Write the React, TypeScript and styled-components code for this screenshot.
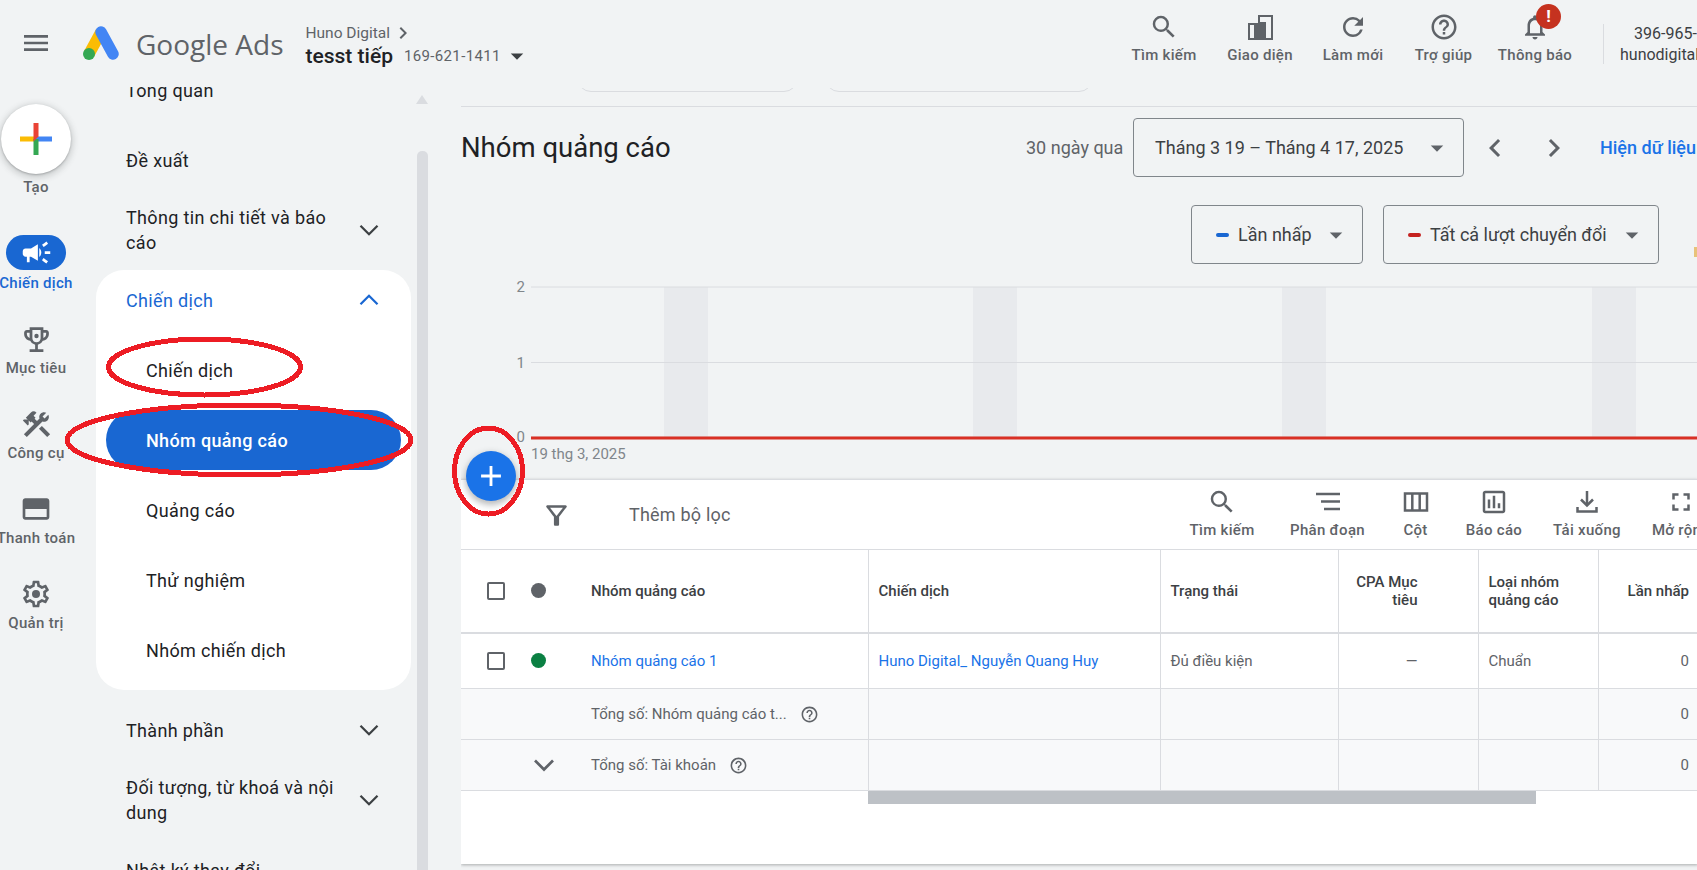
import React from "react";
import styled, { createGlobalStyle } from "styled-components";
import {
  MdAdd,
  MdArrowDropDown,
  MdCampaign,
  MdChevronLeft,
  MdChevronRight,
  MdConstruction,
  MdFullscreen,
  MdHelpOutline,
  MdKeyboardArrowRight,
  MdMenu,
  MdNotificationsNone,
  MdOutlineAssessment,
  MdOutlineFilterAlt,
  MdRefresh,
  MdSearch,
} from "react-icons/md";

const GlobalStyle = createGlobalStyle`
  html, body {
    margin: 0;
    background: #f1f3f4;
    font-family: Roboto, "Liberation Sans", sans-serif;
    color: #3c4043;
  }
`;

const Page = styled.div`
  position: relative;
  width: 1697px;
  height: 870px;
  overflow: hidden;
  background: #f1f3f4;
`;

const Header = styled.header`
  display: flex;
  height: 84px;
  overflow: hidden;
`;

const Brand = styled.div`
  display: flex;
  flex: 0 0 1116px;
  align-items: flex-start;
  padding: 26px 0 0 20px;
  box-sizing: border-box;
`;

const MenuButton = styled.div`
  display: flex;
  width: 32px;
  height: 32px;
  margin-top: 1px;
  font-size: 32px;
  color: #5f6368;
`;

const LogoMark = styled.svg`
  width: 36px;
  height: 34px;
  margin-left: 31px;
`;

const LogoText = styled.div`
  margin-left: 17px;
  font-family: "Open Sans", sans-serif;
  font-size: 28px;
  line-height: 36px;
  color: #5f6368;
`;

const AccountCrumb = styled.div`
  margin: -3px 0 0 22px;
`;

const CrumbParent = styled.div`
  display: flex;
  align-items: center;
  height: 20px;
  font-size: 15.5px;
  color: #5f6368;

  svg {
    font-size: 24px;
    margin-left: 1px;
  }
`;

const CrumbMain = styled.div`
  display: flex;
  align-items: center;
  height: 26px;
`;

const CrumbName = styled.span`
  font-size: 21px;
  font-weight: 500;
  color: #202124;
`;

const CrumbId = styled.span`
  margin-left: 11px;
  font-size: 15px;
  letter-spacing: 0.35px;
  color: #5f6368;
`;

const CrumbCaret = styled.span`
  display: flex;
  margin-left: 1px;
  font-size: 30px;
  color: #3c4043;
`;

const HeaderAction = styled.div<{ $width: number }>`
  position: relative;
  display: flex;
  flex: 0 0 ${(p) => p.$width}px;
  flex-direction: column;
  align-items: center;
  padding-top: 12px;
`;

const ActionIcon = styled.div`
  position: relative;
  display: flex;
  justify-content: center;
  width: 30px;
  height: 30px;
  font-size: 30px;
  color: #5f6368;
`;

const ActionLabel = styled.div`
  margin-top: 3px;
  font-size: 15px;
  line-height: 20px;
  letter-spacing: 0.3px;
  font-weight: 500;
  color: #5f6368;
  white-space: nowrap;
`;

const AlertBadge = styled.span`
  position: absolute;
  top: -8px;
  left: 16px;
  width: 25px;
  height: 25px;
  border-radius: 50%;
  background: #c5321f;
  color: #fff;
  font-size: 17px;
  font-weight: 700;
  line-height: 25px;
  text-align: center;
`;

const HeaderDivider = styled.div`
  flex: 0 0 1px;
  height: 40px;
  margin: 24px 0 0 22px;
  background: #dadce0;
`;

const AccountInfo = styled.div`
  flex: 0 0 auto;
  margin: 23px 0 0 16px;
  font-size: 16px;
  line-height: 21px;
  color: #3c4043;
  white-space: nowrap;
`;

const AccountPhone = styled.div`
  margin-left: 14px;
`;

const Body = styled.div`
  display: flex;
  height: 786px;
`;

const Rail = styled.nav`
  display: flex;
  flex: 0 0 72px;
  flex-direction: column;
  align-items: center;
  gap: 31px;
  min-width: 0;
  width: 72px;
  padding-top: 20px;
`;

const CreateGroup = styled.div`
  display: flex;
  flex-direction: column;
  align-items: center;
  margin-bottom: 7px;
`;

const CreateButton = styled.div`
  display: flex;
  align-items: center;
  justify-content: center;
  width: 70px;
  height: 70px;
  border-radius: 50%;
  background: #fff;
  box-shadow: 0 2px 6px 2px rgba(60, 64, 67, 0.2), 0 1px 2px rgba(60, 64, 67, 0.3);
`;

const RailItem = styled.div`
  display: flex;
  flex-direction: column;
  align-items: center;
  color: #5f6368;
`;

const RailIcon = styled.div`
  display: flex;
  align-items: center;
  justify-content: center;
  height: 30px;
  font-size: 33px;
`;

const RailPill = styled.div`
  display: flex;
  align-items: center;
  justify-content: center;
  width: 60px;
  height: 35px;
  border-radius: 18px;
  background: #1967d2;
  color: #fff;
  font-size: 33px;
`;

const RailLabel = styled.div<{ $active?: boolean; $tight?: boolean }>`
  margin-top: ${(p) => (p.$active || p.$tight ? 3 : 4)}px;
  font-size: 15px;
  line-height: 20px;
  letter-spacing: 0.3px;
  font-weight: 500;
  white-space: nowrap;
  color: ${(p) => (p.$active ? "#1967d2" : "#5f6368")};
`;

const NavColumn = styled.nav`
  flex: 0 0 320px;
  margin: 3px 0 0 24px;
  overflow: hidden;
`;

const NavList = styled.div`
  margin-top: -32px;
`;

const NavItem = styled.div`
  display: flex;
  align-items: center;
  justify-content: space-between;
  box-sizing: border-box;
  height: 70px;
  padding: 0 30px;
  font-size: 18px;
  line-height: 25px;
  letter-spacing: 0.35px;
  color: #202124;
`;

const NavText = styled.div`
  width: 215px;
`;

const ChevronSvg = styled.svg<{ $active?: boolean; $up?: boolean }>`
  flex: 0 0 34px;
  width: 34px;
  height: 34px;
  fill: none;
  stroke: ${(p) => (p.$active ? "#1967d2" : "#3c4043")};
  stroke-width: 1.6;
  transform: ${(p) => (p.$up ? "rotate(180deg)" : "none")};
`;

const CampaignCard = styled.div`
  width: 315px;
  height: 420px;
  margin: 5px 0;
  padding: 0 10px;
  box-sizing: border-box;
  border-radius: 28px;
  background: #fff;
`;

const CardHeading = styled.div`
  display: flex;
  align-items: center;
  justify-content: space-between;
  height: 60px;
  margin-bottom: 10px;
  padding: 0 15px 0 20px;
  font-size: 18px;
  letter-spacing: 0.35px;
  color: #1967d2;
`;

const SubItem = styled.div<{ $active?: boolean }>`
  display: flex;
  align-items: center;
  height: 60px;
  margin-bottom: 10px;
  padding-left: 40px;
  border-radius: 30px;
  font-size: 18px;
  letter-spacing: 0.35px;
  font-weight: ${(p) => (p.$active ? 500 : 400)};
  background: ${(p) => (p.$active ? "#1967d2" : "transparent")};
  color: ${(p) => (p.$active ? "#fff" : "#202124")};
`;

const NavScrollbar = styled.div`
  display: flex;
  flex: 0 0 11px;
  flex-direction: column;
  align-items: center;
  padding-top: 11px;
`;

const ScrollArrow = styled.div`
  width: 0;
  height: 0;
  border-left: 6px solid transparent;
  border-right: 6px solid transparent;
  border-bottom: 9px solid #dadce0;
`;

const ScrollThumb = styled.div`
  flex: 1;
  width: 11px;
  margin-top: 47px;
  border-radius: 5px 5px 0 0;
  background: #dadce0;
`;

const Main = styled.main`
  flex: 0 0 1237px;
  margin-left: 33px;
  overflow: hidden;
`;

const ChipStrip = styled.div`
  display: flex;
  gap: 27px;
  height: 19px;
  margin-top: 4px;
  padding-left: 116px;
  border-bottom: 1px solid #dadce0;
  box-sizing: border-box;
  overflow: hidden;
`;

const Chip = styled.div<{ $width: number }>`
  flex: 0 0 ${(p) => p.$width}px;
  height: 30px;
  margin-top: -26px;
  border: 1px solid #dadce0;
  border-radius: 14px;
  box-sizing: border-box;
`;

const DateRow = styled.div`
  display: flex;
  align-items: center;
  height: 59px;
  margin-top: 11px;
  white-space: nowrap;
`;

const Title = styled.h1`
  flex: 0 0 565px;
  margin: 0;
  font-size: 27.5px;
  font-weight: 400;
  color: #202124;
`;

const RangeLabel = styled.span`
  flex: 0 0 107px;
  font-size: 18px;
  color: #5f6368;
`;

const OutlineSelect = styled.div<{ $width: number }>`
  display: flex;
  flex: 0 0 ${(p) => p.$width}px;
  align-items: center;
  box-sizing: border-box;
  height: 59px;
  padding: 0 11px 0 ${(p) => (p.$width > 300 ? 21 : 24)}px;
  border: 1px solid #80868b;
  border-radius: 4px;
  font-size: 18px;
  color: #3c4043;
  white-space: nowrap;

  svg {
    margin-left: auto;
    font-size: 30px;
    color: #5f6368;
  }
`;

const Pager = styled.div`
  display: flex;
  gap: 23px;
  margin-left: 13px;
  font-size: 36px;
  color: #5f6368;
`;

const PagerIcon = styled.span`
  display: flex;
`;

const DataLink = styled.a`
  margin-left: 28px;
  font-size: 18px;
  font-weight: 500;
  color: #1a73e8;
`;

const MetricRow = styled.div`
  display: flex;
  gap: 20px;
  margin: 28px 0 0 730px;
`;

const MetricDash = styled.span<{ $color: string }>`
  flex: 0 0 13px;
  height: 4px;
  margin-right: 9px;
  border-radius: 2px;
  background: ${(p) => p.$color};
`;

const LegendTick = styled.span`
  flex: 0 0 3px;
  height: 10px;
  margin: 42px 0 0 15px;
  background: #e8c27a;
`;

const ChartArea = styled.div`
  position: relative;
  height: 215px;
`;

const ChartSvg = styled.svg`
  display: block;
  font-family: Roboto, sans-serif;
`;

const AddButton = styled.div`
  position: absolute;
  top: 187px;
  left: 5px;
  z-index: 2;
  display: flex;
  align-items: center;
  justify-content: center;
  width: 50px;
  height: 50px;
  border-radius: 50%;
  background: #1a73e8;
  color: #fff;
  font-size: 34px;
  box-shadow: 0 3px 6px 1px rgba(60, 64, 67, 0.35);
`;

const TableCard = styled.section`
  height: 385px;
  background: #fff;
  border-top: 1px solid #dadce0;
  box-sizing: border-box;
  box-shadow: 0 1px 3px rgba(60, 64, 67, 0.4);
`;

const FilterBar = styled.div`
  display: flex;
  height: 69px;
`;

const FilterGroup = styled.div`
  display: flex;
  flex: 0 0 711px;
  align-items: center;
  padding-left: 80px;
  box-sizing: border-box;
  font-size: 18px;
  letter-spacing: 0.2px;
  color: #5f6368;

  svg {
    font-size: 31px;
    margin-right: 57px;
    margin-top: 1px;
  }
`;

const Tool = styled.div<{ $width: number }>`
  display: flex;
  flex: 0 0 ${(p) => p.$width}px;
  flex-direction: column;
  align-items: center;
  padding-top: 7px;
  color: #5f6368;
`;

const ToolGlyph = styled.svg`
  width: 30px;
  height: 30px;
  fill: none;
  stroke: #5f6368;
  stroke-width: 2.5;
`;

const DataTable = styled.table`
  width: 1237px;
  table-layout: fixed;
  border-collapse: collapse;
  font-size: 15px;
`;

const HeadCell = styled.th<{ $align?: string; $padRight?: number }>`
  height: 83px;
  padding: 0 ${(p) => p.$padRight || 10}px 0 10px;
  box-sizing: border-box;
  border: 1px solid #dadce0;
  border-bottom-width: 2px;
  border-left: 0;
  font-weight: 500;
  line-height: 18px;
  color: #3c4043;
  text-align: ${(p) => p.$align || "left"};
  white-space: normal;

  &:last-child {
    border-right: 0;
    padding-right: 9px;
  }
`;

const Cell = styled.td<{ $align?: string; $muted?: boolean; $padRight?: number; $tall?: boolean }>`
  height: ${(p) => (p.$tall ? 56 : 51)}px;
  padding: 0 ${(p) => p.$padRight || 10}px 0 10px;
  box-sizing: border-box;
  border: 1px solid #dadce0;
  border-left: 0;
  background: ${(p) => (p.$muted ? "#f8f9fa" : "#fff")};
  color: #5f6368;
  text-align: ${(p) => p.$align || "left"};

  &:last-child {
    border-right: 0;
    padding-right: 9px;
  }
`;

const NameCell = styled.div<{ $indent?: number }>`
  display: flex;
  align-items: center;
  margin-left: -10px;
  padding-left: ${(p) => p.$indent || 26}px;
`;

const CheckBox = styled.span`
  flex: 0 0 18px;
  height: 18px;
  box-sizing: border-box;
  border: 2px solid #5f6368;
  border-radius: 2px;
`;

const StatusDot = styled.span<{ $color: string }>`
  flex: 0 0 15px;
  height: 15px;
  margin: 0 45px 0 26px;
  border-radius: 50%;
  background: ${(p) => p.$color};
`;

const TableLink = styled.a`
  color: #1a73e8;
  white-space: nowrap;
`;

const HelpIcon = styled.span`
  display: flex;
  margin-left: 13px;
  font-size: 19px;
  color: #5f6368;
`;

const TotalChevron = styled.svg`
  flex: 0 0 36px;
  width: 36px;
  height: 36px;
  margin-right: 29px;
  fill: none;
  stroke: #5f6368;
  stroke-width: 1.8;
`;

const TableScroll = styled.div`
  width: 668px;
  height: 13px;
  margin-left: 407px;
  background: #bdc1c6;
`;

const Annotations = styled.svg`
  position: absolute;
  top: 0;
  left: 0;
  z-index: 5;
  pointer-events: none;
`;

const LogoIcon = () => (
  <LogoMark viewBox="0 0 36 34">
    <line x1="18" y1="6" x2="6" y2="28" stroke="#fbbc04" strokeWidth="11.5" />
    <circle cx="6" cy="28" r="6" fill="#34a853" />
    <line x1="18" y1="6" x2="30" y2="28" stroke="#4285f4" strokeWidth="11.5" strokeLinecap="round" />
  </LogoMark>
);

const PlusColors = () => (
  <svg width="32" height="32" viewBox="0 0 32 32">
    <rect x="0" y="13.5" width="16" height="5" fill="#fbbc04" />
    <rect x="16" y="13.5" width="16" height="5" fill="#4285f4" />
    <rect x="13.5" y="16" width="5" height="16" fill="#34a853" />
    <path d="M13.5 0h5v13.5l-5 5z" fill="#ea4335" />
  </svg>
);

const Chevron = ({ active, up }: { active?: boolean; up?: boolean }) => (
  <ChevronSvg viewBox="0 0 24 24" $active={active} $up={up}>
    <polyline points="6,9 12,15 18,9" />
  </ChevronSvg>
);

const AppearanceIcon = () => (
  <svg width="30" height="30" viewBox="0 0 30 30" fill="#5f6368">
    <path d="M13 3h15v25H3V11h10V3zm2 2v21h11V5H15zM5 13v13h4V13H5z" />
    <rect x="15" y="10" width="6" height="16" />
  </svg>
);

const TrophyIcon = () => (
  <svg width="33" height="33" viewBox="0 0 24 24" fill="#5f6368">
    <path d="M19 5h-2V3H7v2H5c-1.1 0-2 .9-2 2v1c0 2.55 1.92 4.63 4.39 4.94A5.01 5.01 0 0 0 11 15.9V19H7v2h10v-2h-4v-3.1a5.01 5.01 0 0 0 3.61-2.96C19.08 12.63 21 10.55 21 8V7c0-1.1-.9-2-2-2zM5 8V7h2v3.82C5.84 10.4 5 9.3 5 8zm7 6c-1.65 0-3-1.35-3-3V5h6v6c0 1.65-1.35 3-3 3zm7-6c0 1.3-.84 2.4-2 2.82V7h2v1z" />
    <circle cx="12" cy="9.5" r="1.6" />
  </svg>
);

const CardIcon = () => (
  <svg width="32" height="32" viewBox="0 0 24 24" fill="#5f6368">
    <path d="M20 4H4c-1.1 0-2 .9-2 2v12c0 1.1.9 2 2 2h16c1.1 0 2-.9 2-2V6c0-1.1-.9-2-2-2zm0 14H4v-6h16v6z" />
  </svg>
);

const GearIcon = () => (
  <svg width="32" height="32" viewBox="0 0 24 24" fill="#5f6368">
    <path d="M19.43 12.98c.04-.32.07-.64.07-.98s-.03-.66-.07-.98l2.11-1.65c.19-.15.24-.42.12-.64l-2-3.46c-.12-.22-.39-.3-.61-.22l-2.49 1c-.52-.4-1.08-.73-1.69-.98l-.38-2.65A.488.488 0 0 0 14 2h-4c-.25 0-.46.18-.49.42l-.38 2.65c-.61.25-1.17.59-1.69.98l-2.49-1c-.23-.09-.49 0-.61.22l-2 3.46c-.13.22-.07.49.12.64l2.11 1.65c-.04.32-.07.65-.07.98s.03.66.07.98l-2.11 1.65c-.19.15-.24.42-.12.64l2 3.46c.12.22.39.3.61.22l2.49-1c.52.4 1.08.73 1.69.98l.38 2.65c.03.24.24.42.49.42h4c.25 0 .46-.18.49-.42l.38-2.65c.61-.25 1.17-.59 1.69-.98l2.49 1c.23.09.49 0 .61-.22l2-3.46c.12-.22.07-.49-.12-.64l-2.11-1.65zM17.45 11.27c.04.31.05.52.05.73s-.02.43-.05.73l-.14 1.13.89.7 1.08.84-.7 1.21-1.27-.51-1.04-.42-.9.68c-.43.32-.84.56-1.25.73l-1.06.43-.16 1.13-.2 1.35h-1.4l-.19-1.35-.16-1.13-1.06-.43c-.43-.18-.83-.41-1.23-.71l-.91-.7-1.06.43-1.27.51-.7-1.21 1.08-.84.89-.7-.14-1.13c-.03-.31-.05-.54-.05-.74s.02-.43.05-.73l.14-1.13-.89-.7-1.08-.84.7-1.21 1.27.51 1.04.42.9-.68c.43-.32.84-.56 1.25-.73l1.06-.43.16-1.13.2-1.35h1.39l.19 1.35.16 1.13 1.06.43c.43.18.83.41 1.23.71l.91.7 1.06-.43 1.27-.51.7 1.21-1.07.85-.89.7.14 1.13z" />
    <circle cx="12" cy="12" r="3" />
  </svg>
);

const headerActions = [
  { label: "Tìm kiếm", width: 96, icon: <MdSearch /> },
  { label: "Giao diện", width: 96, icon: <AppearanceIcon /> },
  { label: "Làm mới", width: 90, icon: <MdRefresh /> },
  { label: "Trợ giúp", width: 91, icon: <MdHelpOutline /> },
];

const railItems = [
  { label: "Mục tiêu", icon: <TrophyIcon /> },
  { label: "Công cụ", icon: <MdConstruction /> },
  { label: "Thanh toán", icon: <CardIcon /> },
  { label: "Quản trị", icon: <GearIcon /> },
];

const subItems = ["Chiến dịch", "Nhóm quảng cáo", "Quảng cáo", "Thử nghiệm", "Nhóm chiến dịch"];

const tools = [
  { label: "Tìm kiếm", width: 100, icon: <MdSearch /> },
  {
    label: "Phân đoạn",
    width: 111,
    icon: (
      <ToolGlyph viewBox="0 0 30 30">
        <line x1="3" x2="27" y1="7" y2="7" />
        <line x1="8" x2="27" y1="14.5" y2="14.5" />
        <line x1="11" x2="27" y1="22" y2="22" />
      </ToolGlyph>
    ),
  },
  {
    label: "Cột",
    width: 65,
    icon: (
      <ToolGlyph viewBox="0 0 30 30">
        <rect x="4" y="6.5" width="22" height="17" />
        <line x1="11.3" x2="11.3" y1="6.5" y2="23.5" />
        <line x1="18.7" x2="18.7" y1="6.5" y2="23.5" />
      </ToolGlyph>
    ),
  },
  { label: "Báo cáo", width: 92, icon: <MdOutlineAssessment /> },
  {
    label: "Tải xuống",
    width: 94,
    icon: (
      <ToolGlyph viewBox="0 0 30 30">
        <line x1="15" x2="15" y1="4" y2="18" />
        <polyline points="9,12.5 15,18.5 21,12.5" />
        <polyline points="5.5,20 5.5,24.5 24.5,24.5 24.5,20" />
      </ToolGlyph>
    ),
  },
  { label: "Mở rộng", width: 94, icon: <MdFullscreen /> },
];

const columns = [407, 292, 178, 140, 120, 100];
const weekendBands = [203, 512, 821, 1131];
const gridLines = [
  { y: 23, label: "2" },
  { y: 98.5, label: "1" },
  { y: 173, label: "0" },
];

export default function App() {
  return (
    <Page>
      <GlobalStyle />
      <Header>
        <Brand>
          <MenuButton>
            <MdMenu />
          </MenuButton>
          <LogoIcon />
          <LogoText>Google Ads</LogoText>
          <AccountCrumb>
            <CrumbParent>
              Huno Digital
              <MdKeyboardArrowRight />
            </CrumbParent>
            <CrumbMain>
              <CrumbName>tesst tiếp</CrumbName>
              <CrumbId>169-621-1411</CrumbId>
              <CrumbCaret>
                <MdArrowDropDown />
              </CrumbCaret>
            </CrumbMain>
          </AccountCrumb>
        </Brand>
        {headerActions.map((action) => (
          <HeaderAction key={action.label} $width={action.width}>
            <ActionIcon>{action.icon}</ActionIcon>
            <ActionLabel>{action.label}</ActionLabel>
          </HeaderAction>
        ))}
        <HeaderAction $width={92}>
          <ActionIcon>
            <MdNotificationsNone />
            <AlertBadge>!</AlertBadge>
          </ActionIcon>
          <ActionLabel>Thông báo</ActionLabel>
        </HeaderAction>
        <HeaderDivider />
        <AccountInfo>
          <AccountPhone>396-965-6</AccountPhone>
          <div>hunodigital</div>
        </AccountInfo>
      </Header>

      <Body>
        <Rail>
          <CreateGroup>
            <CreateButton>
              <PlusColors />
            </CreateButton>
            <RailLabel $tight>Tạo</RailLabel>
          </CreateGroup>
          <RailItem>
            <RailPill>
              <MdCampaign />
            </RailPill>
            <RailLabel $active>Chiến dịch</RailLabel>
          </RailItem>
          {railItems.map((item) => (
            <RailItem key={item.label}>
              <RailIcon>{item.icon}</RailIcon>
              <RailLabel>{item.label}</RailLabel>
            </RailItem>
          ))}
        </Rail>

        <NavColumn>
          <NavList>
            <NavItem>Tổng quan</NavItem>
            <NavItem>Đề xuất</NavItem>
            <NavItem>
              <NavText>Thông tin chi tiết và báo cáo</NavText>
              <Chevron />
            </NavItem>
            <CampaignCard>
              <CardHeading>
                Chiến dịch
                <Chevron active up />
              </CardHeading>
              {subItems.map((item) => (
                <SubItem key={item} $active={item === "Nhóm quảng cáo"}>
                  {item}
                </SubItem>
              ))}
            </CampaignCard>
            <NavItem>
              Thành phần
              <Chevron />
            </NavItem>
            <NavItem>
              <NavText>Đối tượng, từ khoá và nội dung</NavText>
              <Chevron />
            </NavItem>
            <NavItem>Nhật ký thay đổi</NavItem>
          </NavList>
        </NavColumn>
        <NavScrollbar>
          <ScrollArrow />
          <ScrollThumb />
        </NavScrollbar>

        <Main>
          <ChipStrip>
            <Chip $width={221} />
            <Chip $width={268} />
          </ChipStrip>
          <DateRow>
            <Title>Nhóm quảng cáo</Title>
            <RangeLabel>30 ngày qua</RangeLabel>
            <OutlineSelect $width={331}>
              Tháng 3 19 – Tháng 4 17, 2025
              <MdArrowDropDown />
            </OutlineSelect>
            <Pager>
              <PagerIcon>
                <MdChevronLeft />
              </PagerIcon>
              <PagerIcon>
                <MdChevronRight />
              </PagerIcon>
            </Pager>
            <DataLink>Hiện dữ liệu</DataLink>
          </DateRow>
          <MetricRow>
            <OutlineSelect $width={172}>
              <MetricDash $color="#1967d2" />
              Lần nhấp
              <MdArrowDropDown />
            </OutlineSelect>
            <OutlineSelect $width={276}>
              <MetricDash $color="#c5221f" />
              Tất cả lượt chuyển đổi
              <MdArrowDropDown />
            </OutlineSelect>
            <LegendTick />
          </MetricRow>
          <ChartArea>
            <ChartSvg width="1237" height="215" viewBox="0 0 1237 215">
              {weekendBands.map((x) => (
                <rect key={x} x={x} y="23" width="44" height="150" fill="#e8eaed" />
              ))}
              {gridLines.map((line) => (
                <g key={line.label}>
                  <line x1="70" x2="1237" y1={line.y} y2={line.y} stroke="#dadce0" />
                  <text x="64" y={line.y + 5} fontSize="15" fill="#80868b" textAnchor="end">
                    {line.label}
                  </text>
                </g>
              ))}
              <line x1="70" x2="1237" y1="174" y2="174" stroke="#d93025" strokeWidth="3" />
              <text x="70" y="195" fontSize="15" fill="#80868b">
                19 thg 3, 2025
              </text>
            </ChartSvg>
            <AddButton>
              <MdAdd />
            </AddButton>
          </ChartArea>
          <TableCard>
            <FilterBar>
              <FilterGroup>
                <MdOutlineFilterAlt />
                Thêm bộ lọc
              </FilterGroup>
              {tools.map((tool) => (
                <Tool key={tool.label} $width={tool.width}>
                  <ActionIcon>{tool.icon}</ActionIcon>
                  <ActionLabel>{tool.label}</ActionLabel>
                </Tool>
              ))}
            </FilterBar>
            <DataTable>
              <colgroup>
                {columns.map((w, i) => (
                  <col key={i} width={w} />
                ))}
              </colgroup>
              <thead>
                <tr>
                  <HeadCell>
                    <NameCell>
                      <CheckBox />
                      <StatusDot $color="#5f6368" />
                      Nhóm quảng cáo
                    </NameCell>
                  </HeadCell>
                  <HeadCell>Chiến dịch</HeadCell>
                  <HeadCell>Trạng thái</HeadCell>
                  <HeadCell $align="right" $padRight={60}>
                    CPA Mục
                    <br />
                    tiêu
                  </HeadCell>
                  <HeadCell>
                    Loại nhóm
                    <br />
                    quảng cáo
                  </HeadCell>
                  <HeadCell $align="right">Lần nhấp</HeadCell>
                </tr>
              </thead>
              <tbody>
                <tr>
                  <Cell $tall>
                    <NameCell>
                      <CheckBox />
                      <StatusDot $color="#0b8043" />
                      <TableLink>Nhóm quảng cáo 1</TableLink>
                    </NameCell>
                  </Cell>
                  <Cell>
                    <TableLink>Huno Digital_ Nguyễn Quang Huy</TableLink>
                  </Cell>
                  <Cell>Đủ điều kiện</Cell>
                  <Cell $align="right" $padRight={60}>
                    —
                  </Cell>
                  <Cell>Chuẩn</Cell>
                  <Cell $align="right">0</Cell>
                </tr>
                <tr>
                  <Cell $muted>
                    <NameCell $indent={130}>
                      Tổng số: Nhóm quảng cáo t...
                      <HelpIcon>
                        <MdHelpOutline />
                      </HelpIcon>
                    </NameCell>
                  </Cell>
                  <Cell $muted />
                  <Cell $muted />
                  <Cell $muted />
                  <Cell $muted />
                  <Cell $muted $align="right">
                    0
                  </Cell>
                </tr>
                <tr>
                  <Cell $muted>
                    <NameCell $indent={65}>
                      <TotalChevron viewBox="0 0 24 24">
                        <polyline points="6,9 12,15 18,9" />
                      </TotalChevron>
                      Tổng số: Tài khoản
                      <HelpIcon>
                        <MdHelpOutline />
                      </HelpIcon>
                    </NameCell>
                  </Cell>
                  <Cell $muted />
                  <Cell $muted />
                  <Cell $muted />
                  <Cell $muted />
                  <Cell $muted $align="right">
                    0
                  </Cell>
                </tr>
              </tbody>
            </DataTable>
            <TableScroll />
          </TableCard>
        </Main>
      </Body>

      <Annotations width="1697" height="870" fill="none" stroke="#ed1c24" strokeWidth="5" shapeRendering="crispEdges">
        <ellipse cx="204.5" cy="367" rx="96" ry="28" />
        <ellipse cx="239" cy="440" rx="172" ry="35" />
        <ellipse cx="488.5" cy="471" rx="34" ry="43" />
      </Annotations>
    </Page>
  );
}
